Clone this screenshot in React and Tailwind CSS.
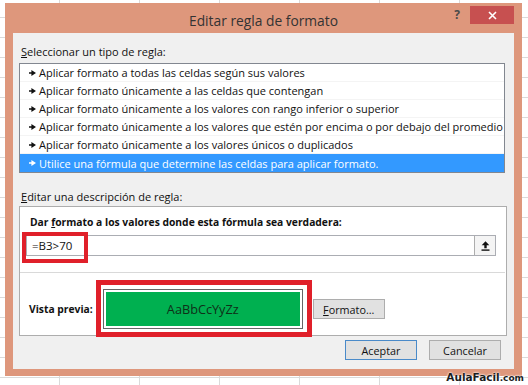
import React from "react";

const rules = [
  "Aplicar formato a todas las celdas según sus valores",
  "Aplicar formato únicamente a las celdas que contengan",
  "Aplicar formato únicamente a los valores con rango inferior o superior",
  "Aplicar formato únicamente a los valores que estén por encima o por debajo del promedio",
  "Aplicar formato únicamente a los valores únicos o duplicados",
  "Utilice una fórmula que determine las celdas para aplicar formato.",
];

function Bullet() {
  return (
    <svg width="7" height="6" viewBox="0 0 7 6" className="shrink-0">
      <path d="M0 2.2h3v1.6H0z M2.4 0 L7 3 L2.4 6Z" fill="currentColor" />
    </svg>
  );
}

export default function App() {
  return (
    <div className="relative w-[528px] h-[385px] overflow-hidden bg-white bg-[linear-gradient(to_right,#dadada_1px,transparent_1px),linear-gradient(to_bottom,#dadada_1px,transparent_1px)] bg-[size:80px_20px] bg-[position:59px_17px] pt-[3px] pl-[5px] font-['Open_Sans',sans-serif] text-[#111]">
      {/* dialog window */}
      <div className="w-[517px] h-[373px] bg-[#DE977C] flex flex-col px-[8px] pb-[7px]">
        {/* title bar */}
        <div className="h-[30px] shrink-0 grid grid-cols-[1fr_auto_1fr]">
          <div />
          <div className="pt-[9px] text-[13.8px] leading-[18px] text-[#333] whitespace-nowrap">
            Editar regla de formato
          </div>
          <div className="flex justify-end items-start pt-[3px]">
            <span className="mt-[2px] mr-[10px] text-[12px] leading-[14px] font-bold text-[#4a4a4a]">?</span>
            <div className="w-[44px] h-[18px] bg-[#C75050] flex items-center justify-center">
              <svg width="9" height="9" viewBox="0 0 9 9">
                <path d="M1 1 L8 8 M8 1 L1 8" stroke="white" strokeWidth="1.6" />
              </svg>
            </div>
          </div>
        </div>

        {/* client area */}
        <div className="flex-1 bg-[#F0F0F0] flex flex-col text-[11px] leading-[15px]">
          <div className="pt-[11px] pl-[8px] whitespace-nowrap">
            <span className="underline">S</span>eleccionar un tipo de regla:
          </div>

          <div className="mt-[4px] ml-[6px] w-[486px] border border-[#828790] bg-white flex flex-col">
            {rules.map((r, i) => {
              const sel = i === rules.length - 1;
              return (
                <div
                  key={i}
                  className={
                    sel
                      ? "h-[18px] flex items-center pl-[9px] bg-[#3399FF] text-white whitespace-nowrap"
                      : "h-[18px] flex items-center pl-[9px] border-b border-[#F4F4F4] text-[#111] whitespace-nowrap"
                  }
                >
                  <Bullet />
                  <span className="ml-[3px]">{r}</span>
                </div>
              );
            })}
          </div>

          <div className="mt-[16px] pl-[8px] whitespace-nowrap">
            <span className="underline">E</span>ditar una descripción de regla:
          </div>

          <div className="mt-[2px] ml-[6px] w-[488px] h-[130px] border border-[#ADADAD] bg-white flex flex-col">
            <div className="pt-[8px] pl-[10px] font-bold text-[10.3px] leading-[15px] whitespace-nowrap">
              Dar <span className="underline">f</span>ormato a los valores donde esta fórmula sea verdadera:
            </div>

            <div className="relative mt-[5px] ml-[6px] w-[470px] h-[21px] border border-[#ABADB3] flex">
              <div className="flex-1 flex items-center pl-[5px] text-[11.5px]">=B3&gt;70</div>
              <div className="w-[21px] border-l border-[#ADADAD] bg-[#F4F4F4] flex items-center justify-center">
                <svg width="9" height="10" viewBox="0 0 9 10">
                  <path d="M4.5 0.3 L8.3 4.3 H5.7 V7.2 H3.3 V4.3 H0.7Z" fill="#111" />
                  <rect x="0.5" y="8.4" width="8" height="1.4" fill="#111" />
                </svg>
              </div>
              <div className="absolute -left-[5px] -top-[4px] w-[66px] h-[31px] border-[4px] border-[#E0202A]" />
            </div>

            <div className="mt-[16px] h-px mr-[1px] bg-[#D9D9D9]" />

            <div className="mt-[16px] flex items-center pl-[9px]">
              <span className="font-bold text-[10.3px] whitespace-nowrap">Vista previa:</span>
              <div className="relative ml-[10px] w-[200px] h-[40px] border border-[#666] p-[2px]">
                <div className="w-full h-full bg-[#00B050] flex items-center justify-center text-[12.7px] text-[#0F2F18]">
                  AaBbCcYyZz
                </div>
                <div className="absolute -left-[8px] -top-[10px] w-[216px] h-[57px] border-[5px] border-[#E0202A]" />
              </div>
              <div className="ml-[10px] w-[72px] h-[20px] border border-[#ADADAD] bg-[#E1E1E1] flex items-center justify-center text-[10.8px]">
                <span className="underline">F</span>ormato...
              </div>
            </div>
          </div>

          <div className="mt-[4px] flex justify-end gap-[12px] pr-[13px]">
            <div className="w-[72px] h-[20px] border border-[#4A8AC9] bg-[#E1E1E1] flex items-center justify-center text-[10.8px]">
              Aceptar
            </div>
            <div className="w-[72px] h-[20px] border border-[#ADADAD] bg-[#E1E1E1] flex items-center justify-center text-[10.8px]">
              Cancelar
            </div>
          </div>
        </div>
      </div>

      {/* watermark */}
      <div className="absolute right-[4px] bottom-[1px] font-['DejaVu_Sans',sans-serif] font-bold text-[#1d1d1d] leading-[11px] whitespace-nowrap [text-shadow:0_0_2px_#fff,0_0_2px_#fff]">
        <span className="text-[10.5px]">AulaFacil</span>
        <span className="text-[9px]">.com</span>
      </div>
    </div>
  );
}
